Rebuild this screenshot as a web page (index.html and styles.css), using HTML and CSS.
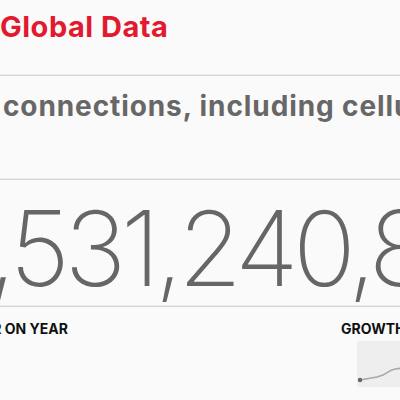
FILE: index.html
```html
<!DOCTYPE html>
<html>
<head>
<meta charset="utf-8">
<link rel="stylesheet" href="styles.css">
</head>
<body>
<div class="page">
  <header class="head">
    <h1 class="title">Global Data</h1>
  </header>
  <div class="rule"></div>
  <section class="sub">
    <p class="subtitle">connections, including cellular</p>
  </section>
  <div class="rule"></div>
  <section class="big">
    <div class="number">8,531,240,8</div>
  </section>
  <div class="rule"></div>
  <section class="foot">
    <div class="label yoy">YEAR ON YEAR</div>
    <div class="growth">
      <div class="label">GROWTH</div>
      <div class="spark">
        <svg width="60" height="46" viewBox="0 0 60 46">
          <path d="M3 39 L20 36 L26 34 C30 32 33 29 38 28 L46 27 L60 25" fill="none" stroke="#a8a8a8" stroke-width="1.5"/>
          <circle cx="3" cy="39" r="2.2" fill="#666"/>
        </svg>
      </div>
    </div>
  </section>
</div>
</body>
</html>
```

FILE: styles.css
```css
html, body {
  margin: 0;
  padding: 0;
  width: 400px;
  height: 400px;
  overflow: hidden;
  background: #fafafa;
}
.page {
  width: 400px;
  display: flex;
  flex-direction: column;
  font-family: Inter, "Liberation Sans", sans-serif;
}
.head {
  height: 74px;
  box-sizing: border-box;
  padding-top: 12px;
}
.title {
  margin: 0;
  font-size: 29px;
  line-height: 29px;
  font-weight: 700;
  letter-spacing: 0.5px;
  color: #e2192f;
  white-space: nowrap;
}
.rule {
  height: 2px;
  background: #d4d4d4;
  border-top: 1px solid #ececec;
  box-sizing: border-box;
}
.sub {
  height: 102px;
  box-sizing: border-box;
  padding: 17px 0 0 3px;
  overflow: hidden;
}
.subtitle {
  margin: 0;
  font-size: 28px;
  line-height: 27px;
  font-weight: 700;
  letter-spacing: 0.9px;
  color: #676767;
  white-space: nowrap;
}
.big {
  height: 125px;
  box-sizing: border-box;
  padding-top: 16px;
  overflow: hidden;
}
.number {
  margin-left: -67px;
  font-size: 104px;
  line-height: 104px;
  font-weight: 200;
  letter-spacing: -5.5px;
  font-variant-numeric: proportional-nums;
  font-feature-settings: "pnum" 1, "tnum" 0;
  color: #666;
  white-space: nowrap;
}
.foot {
  display: flex;
  justify-content: space-between;
  padding-top: 14px;
  overflow: hidden;
}
.label {
  font-size: 14px;
  line-height: 15px;
  font-weight: 700;
  color: #111;
  white-space: nowrap;
}
.yoy {
  margin-left: -37px;
}
.growth {
  width: 59px;
  display: flex;
  flex-direction: column;
  gap: 5px;
}
.spark {
  margin-left: 16px;
  width: 60px;
  height: 46px;
  background: #eeeeee;
}
.spark svg {
  display: block;
}
```
